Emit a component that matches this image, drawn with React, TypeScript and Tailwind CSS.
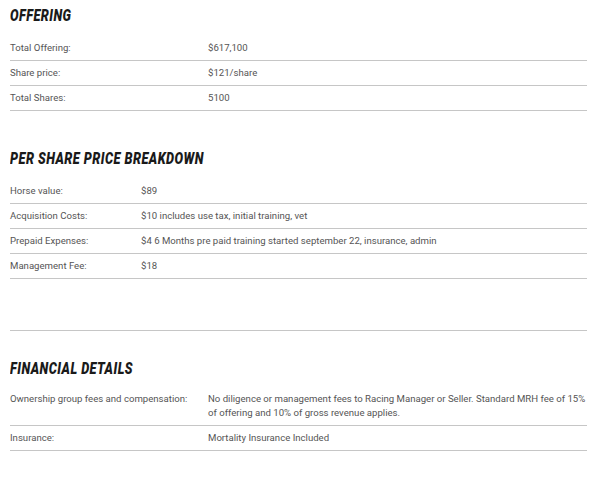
import React from "react";

function Heading({ children, className = "" }: { children: React.ReactNode; className?: string }) {
  return (
    <div className={`h-[30px] flex items-center ${className}`}>
      <span className="inline-block origin-left scale-x-[0.75] text-[17px] leading-[20px] font-black italic uppercase text-[#1a1a1a] tracking-[0.6px] whitespace-nowrap [font-family:Roboto,'Liberation_Sans',sans-serif]">
        {children}
      </span>
    </div>
  );
}

function Row({ label, value, labelW }: { label: string; value: React.ReactNode; labelW: string }) {
  return (
    <div className="flex border-b border-[#c6c6c6] py-[5px] leading-[14px]">
      <div className={`${labelW} shrink-0`}>{label}</div>
      <div className="flex-1">{value}</div>
    </div>
  );
}

export default function App() {
  return (
    <div className="w-[595px] h-[485px] bg-white px-[10px] text-[9.6px] text-[#555] [font-family:Roboto,'Liberation_Sans',sans-serif]">
      <div className="w-[577px]">
        <Heading>Offering</Heading>
        <div className="mt-[6px]">
          <Row labelW="w-[198px]" label="Total Offering:" value="$617,100" />
          <Row labelW="w-[198px]" label="Share price:" value="$121/share" />
          <Row labelW="w-[198px]" label="Total Shares:" value="5100" />
        </div>

        <Heading className="mt-[32px]">Per Share Price Breakdown</Heading>
        <div className="mt-[6px]">
          <Row labelW="w-[131px]" label="Horse value:" value="$89" />
          <Row labelW="w-[131px]" label="Acquisition Costs:" value="$10 includes use tax, initial training, vet" />
          <Row labelW="w-[131px]" label="Prepaid Expenses:" value="$4 6 Months pre paid training started september 22, insurance, admin" />
          <Row labelW="w-[131px]" label="Management Fee:" value="$18" />
        </div>

        <div className="mt-[51px] border-b border-[#c6c6c6]" />

        <Heading className="mt-[22px]">Financial Details</Heading>
        <div className="mt-[4px]">
          <Row
            labelW="w-[198px]"
            label="Ownership group fees and compensation:"
            value="No diligence or management fees to Racing Manager or Seller. Standard MRH fee of 15% of offering and 10% of gross revenue applies."
          />
          <Row labelW="w-[198px]" label="Insurance:" value="Mortality Insurance Included" />
        </div>
      </div>
    </div>
  );
}
